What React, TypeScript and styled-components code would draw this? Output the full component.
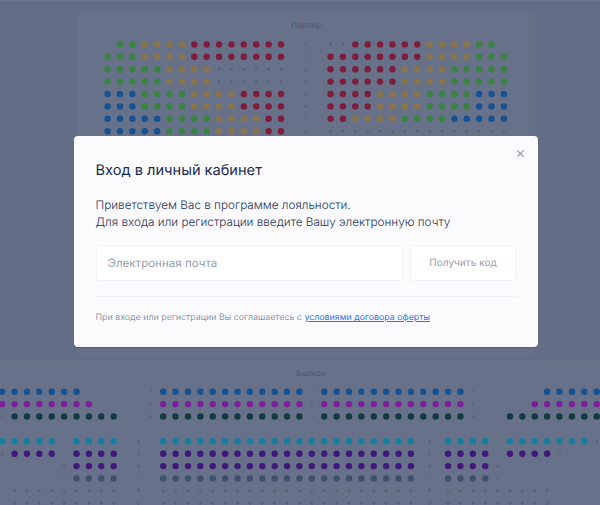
import React from "react";
import styled, { createGlobalStyle } from "styled-components";

const GlobalStyle = createGlobalStyle`
  * { box-sizing: border-box; }
  body {
    margin: 0;
    font-family: Inter, "Liberation Sans", sans-serif;
    text-rendering: geometricPrecision;
    background: #636d87;
  }
`;

const Page = styled.div`
  position: relative;
  width: 600px;
  height: 505px;
  overflow: hidden;
  border-top: 1px solid #6a748d;
  background: #636d87;
`;

const Hall = styled.section<{ $wide?: boolean }>`
  width: ${(p) => (p.$wide ? "600px" : "458px")};
  height: ${(p) => (p.$wide ? "160px" : "342px")};
  margin: ${(p) => (p.$wide ? "5px 0 0" : "12px 0 0 77px")};
  padding-top: ${(p) => (p.$wide ? "8px" : "7px")};
  background: #677189;
  border-radius: ${(p) => (p.$wide ? "0" : "4px")};
  overflow: hidden;
`;

const Stage = styled.div`
  display: flow-root;
  height: 505px;
`;

const HallTitle = styled.h2<{ $wide?: boolean }>`
  margin: 0;
  padding-left: ${(p) => (p.$wide ? "22px" : "0")};
  text-align: center;
  font: 400 8.4px/12px Inter, "Liberation Sans", sans-serif;
  color: #4d566e;
`;

const SeatMap = styled.svg`
  display: block;
`;

const RowNumber = styled.text`
  font: 400 4.5px Inter, "Liberation Sans", sans-serif;
  text-anchor: middle;
  fill: #4c5672;
`;

const Overlay = styled.div`
  position: absolute;
  inset: 0;
  padding: 135px 0 0 73.5px;
`;

const Dialog = styled.div`
  position: relative;
  width: 464px;
  height: 211px;
  padding: 22px 21px 0 22px;
  background: #fbfbfd;
  border-radius: 4px;
  box-shadow: 0 1px 1px #525c77;
`;

const CloseButton = styled.button`
  position: absolute;
  top: 14px;
  right: 14px;
  width: 7px;
  height: 7px;
  padding: 0;
  border: 0;
  background: none;
  svg { display: block; }
`;

const Title = styled.h1`
  margin: 0;
  font-size: 14.6px;
  line-height: 24px;
  font-weight: 400;
  color: #1b2a50;
  white-space: nowrap;
`;

const Greeting = styled.p`
  margin: 15px 0 0;
  font-size: 11.74px;
  line-height: 17px;
  font-weight: 300;
  color: #26335a;
  white-space: nowrap;
`;

const Form = styled.div`
  display: flex;
  gap: 7px;
  margin-top: 14px;
`;

const EmailInput = styled.input`
  width: 307.5px;
  height: 36px;
  padding: 0 11px;
  border: 1px solid #f1f2f5;
  border-radius: 2px;
  background: #fff;
  font: 400 11.55px Inter, "Liberation Sans", sans-serif;
  text-rendering: geometricPrecision;
  outline: 0;
  &::placeholder { color: #979da9; opacity: 1; }
`;

const CodeButton = styled.button`
  width: 106px;
  height: 36px;
  padding: 0;
  border: 1px solid #f1f2f5;
  border-radius: 3px;
  background: #fff;
  font: 400 10.1px Inter, "Liberation Sans", sans-serif;
  text-rendering: geometricPrecision;
  color: #979da9;
`;

const Agreement = styled.p`
  margin: 15px 0 0;
  padding-top: 15px;
  border-top: 1px solid #f0f1f4;
  font-size: 8.84px;
  line-height: 12px;
  color: #8f95a5;
  white-space: nowrap;
  a { color: #2f6fed; text-decoration: underline; }
`;

const STEP = 12.385;

const seatColors: Record<string, string> = {
  g: "#388440",
  t: "#8a744c",
  r: "#7e1c3a",
  b: "#145294",
  m: "#7e1c9c",
  d: "#123a40",
  c: "#147ea0",
  p: "#42177c",
  s: "#3f506f",
};

const s = (char: string, count: number) => char.repeat(count);

/* "#" is a row number, "=" a row number centred over two places, "." an unavailable seat */
const parterre = [
  " ggttttrrrrrrrr # ..rrrrrrttttgg ",
  "gggttttrrrrrrrr # rrrrrrrrttttggg",
  "gggggtttt...... # rrrrrrttttggggg",
  "gggggtttt...... # rrrrrrttttggggg",
  "bbbggggttttrrrr # rrrrttttggggbbb",
  "bbbggggttttrrrr # rrrrttttggggbbb",
  "bbbbbggggttttrr # rrttttggggbbbbb",
  "bbbbbggggttttrr # ...............",
];

const balcony = [
  s("b", 7) + s(" ", 5) + "#" + s("b", 12) + "#" + s("b", 12) + "#" + s(" ", 5) + s("b", 5),
  s("m", 8) + s(" ", 4) + "#" + s("m", 12) + "#" + s("m", 12) + "#" + s(" ", 4) + s("m", 6),
  "#" + s("d", 9) + "  #" + s("d", 12) + "#" + s("d", 12) + "#  " + s("d", 8),
  s("c", 5) + " cccc # " + s("c", 21) + "= cccc " + s("c", 7) + "#",
  "#pppp pppp # " + s("p", 21) + "= pppp pppp#",
  "     #pppp # " + s("p", 21) + "= pppp#",
  "     #ssss # " + s("s", 21) + "= ssss#",
  " #" + s(".", 8) + " # " + s(".", 21) + "= " + s(".", 8) + "#",
  " #" + s(".", 8) + " # " + s(".", 21) + "= " + s(".", 8) + "#",
];

type SeatsProps = { rows: string[]; x: number; y: number; rowTop: (row: number) => number };

function Seats({ rows, x, y, rowTop }: SeatsProps) {
  return (
    <g transform={`translate(${x} ${y})`}>
      {rows.map((row, r) =>
        [...row].map((kind, c) => {
          const cx = c * STEP;
          const cy = rowTop(r);
          const key = `${r}-${c}`;
          if (kind === " ") return null;
          if (kind === "#" || kind === "=") {
            return (
              <RowNumber key={key} x={kind === "=" ? cx + STEP / 2 : cx} y={cy + 1.6}>
                {r + 1}
              </RowNumber>
            );
          }
          if (kind === ".") return <circle key={key} cx={cx} cy={cy} r={1.4} fill="#58627c" />;
          return <circle key={key} cx={cx} cy={cy} r={3.2} fill={seatColors[kind]} />;
        })
      )}
    </g>
  );
}

export default function App() {
  return (
    <Page>
      <GlobalStyle />
      <Stage>
        <Hall>
          <HallTitle>Партер</HallTitle>
          <SeatMap width="458" height="110">
            <Seats rows={parterre} x={30.6} y={12.4} rowTop={(r) => r * 12.4} />
          </SeatMap>
        </Hall>
        <Hall $wide>
          <HallTitle $wide>Балкон</HallTitle>
          <SeatMap width="600" height="141">
            <Seats rows={balcony} x={2.2} y={11.7} rowTop={(r) => (r > 2 ? r + 1 : r) * 12.4} />
          </SeatMap>
        </Hall>
      </Stage>
      <Overlay>
        <Dialog role="dialog">
          <CloseButton aria-label="Закрыть">
            <svg width="7" height="7" viewBox="0 0 7 7" stroke="#8a919f" strokeWidth="1.1">
              <path d="M0.4 0.4L6.6 6.6M6.6 0.4L0.4 6.6" />
            </svg>
          </CloseButton>
          <Title>Вход в личный кабинет</Title>
          <Greeting>
            Приветствуем Вас в программе лояльности.
            <br />
            Для входа или регистрации введите Вашу электронную почту
          </Greeting>
          <Form>
            <EmailInput placeholder="Электронная почта" />
            <CodeButton>Получить код</CodeButton>
          </Form>
          <Agreement>
            При входе или регистрации Вы соглашаетесь с <a>условиями договора оферты</a>
          </Agreement>
        </Dialog>
      </Overlay>
    </Page>
  );
}
